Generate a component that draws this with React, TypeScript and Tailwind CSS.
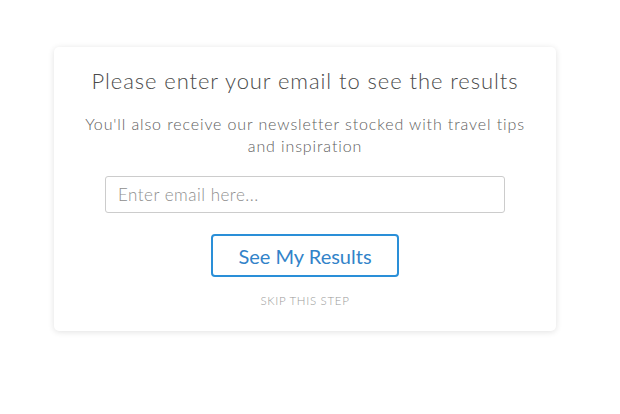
export default function App() {
  return (
    <div className="w-[620px] h-[414px] bg-white pt-[47px] pl-[54px]" style={{ fontFamily: "Lato, 'Open Sans', sans-serif" }}>
      <div className="w-[502px] h-[284px] bg-white rounded-[5px] shadow-[0_1px_6px_rgba(0,0,0,0.12)] flex flex-col items-center pt-[19px]">
        <h1 className="text-[22px] leading-[30px] text-[#4a4a4a] font-light tracking-[0.92px]">Please enter your email to see the results</h1>
        <p className="mt-[17px] text-[16px] leading-[22px] text-[#5e5e5e] font-light text-center w-[450px] tracking-[0.88px]">
          You'll also receive our newsletter stocked with travel tips and inspiration
        </p>
        <input
          type="text"
          placeholder="Enter email here..."
          className="mt-[19px] w-[400px] h-[37px] border border-[#ccc] rounded-[3px] px-[12px] text-[17px] tracking-[0.5px] font-light placeholder-[#8e8e8e] outline-none"
        />
        <button className="mt-[21px] w-[188px] h-[43px] border-2 border-[#2a8fd8] rounded-[4px] text-[#3283c9] text-[20px] bg-white">
          See My Results
        </button>
        <div className="mt-[17px] text-[11.5px] leading-[14px] text-[#999] font-light tracking-[0.7px]">SKIP THIS STEP</div>
      </div>
    </div>
  );
}
